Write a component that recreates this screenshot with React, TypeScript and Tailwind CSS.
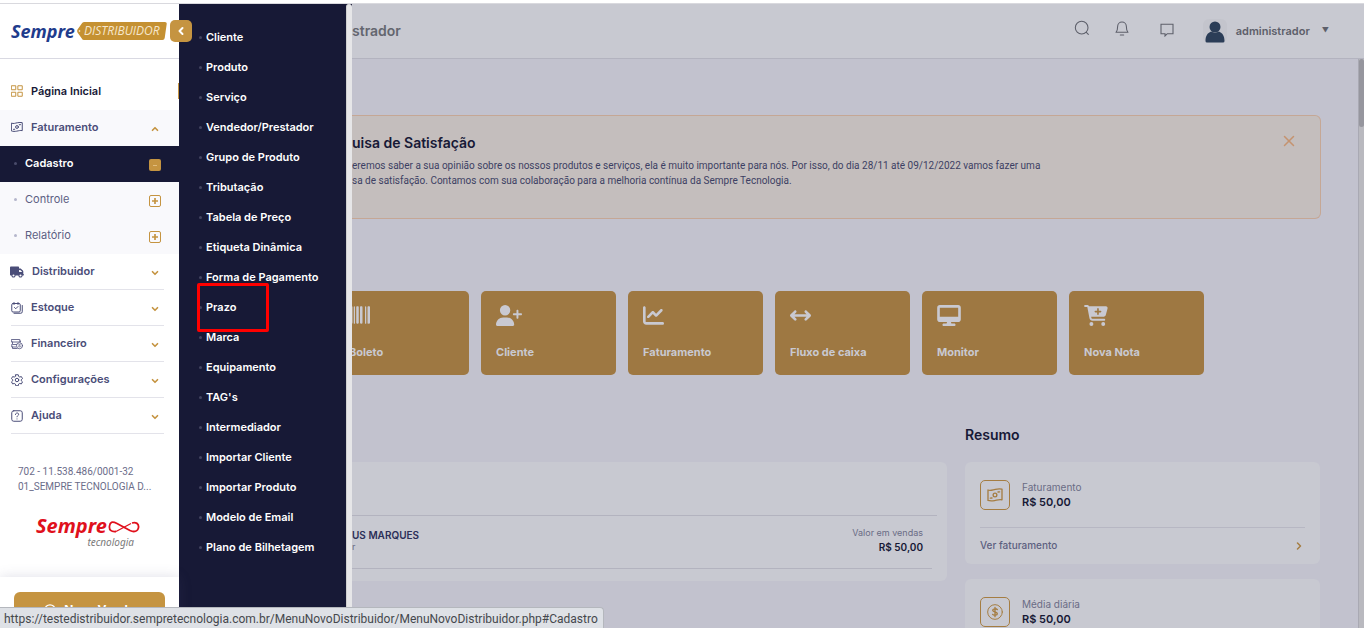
import type { ReactNode } from 'react';
import {
  FaArrowsLeftRight,
  FaBarcode,
  FaCartPlus,
  FaChartLine,
  FaDesktop,
  FaTruck,
  FaUserPlus,
} from 'react-icons/fa6';
import { ChevronDown, ChevronLeft, ChevronRight, ChevronUp, X } from 'lucide-react';

const cadastroLinks = [
  'Cliente',
  'Produto',
  'Serviço',
  'Vendedor/Prestador',
  'Grupo de Produto',
  'Tributação',
  'Tabela de Preço',
  'Etiqueta Dinâmica',
  'Forma de Pagamento',
  'Prazo',
  'Marca',
  'Equipamento',
  "TAG's",
  'Intermediador',
  'Importar Cliente',
  'Importar Produto',
  'Modelo de Email',
  'Plano de Bilhetagem',
];

const shortcuts = [
  { label: 'Boleto', icon: <FaBarcode className="h-5 w-[22px]" /> },
  { label: 'Cliente', icon: <FaUserPlus className="h-[21px] w-[26px]" /> },
  { label: 'Faturamento', icon: <FaChartLine className="h-[21px] w-[21px]" /> },
  { label: 'Fluxo de caixa', icon: <FaArrowsLeftRight className="h-[21px] w-[21px]" /> },
  { label: 'Monitor', icon: <FaDesktop className="h-[21px] w-6" /> },
  { label: 'Nova Nota', icon: <FaCartPlus className="h-[21px] w-6" /> },
];

function LineIcon({ children, className = 'h-3 w-3' }: { children: ReactNode; className?: string }) {
  return (
    <svg
      viewBox="0 0 24 24"
      fill="none"
      stroke="currentColor"
      strokeWidth="2"
      strokeLinecap="round"
      strokeLinejoin="round"
      className={className}
    >
      {children}
    </svg>
  );
}

function BanknoteIcon({ className }: { className?: string }) {
  return (
    <LineIcon className={className}>
      <path d="M1.500 4.500c4 1.500 7-.3 11-1s7-.8 10-.2v16c-4-1-7 .3-11 1s-7 .8-10-.2z" />
      <circle cx="12" cy="12" r="2.800" />
      <path d="M16.500 7.500l2.500-.2M5 16.700l2.500-.2" />
    </LineIcon>
  );
}

function GridIcon() {
  return (
    <LineIcon className="h-3 w-3 text-[#c59441]">
      <path d="M1.500 1.500h8v8h-8zM14.500 1.500h8v8h-8zM1.500 14.500h8v8h-8zM14.500 14.500h8v8h-8z" />
    </LineIcon>
  );
}

function StockIcon() {
  return (
    <LineIcon>
      <rect x="1.500" y="3" width="17" height="17" rx="2.500" />
      <path d="M6 1v4M14 1v4M7 11l2.500 2.500 4.500-4.500M22.500 7v12.500a3 3 0 0 1-3 3H6" />
    </LineIcon>
  );
}

function FinanceIcon() {
  return (
    <LineIcon>
      <path d="M1.500 3h16v5h-16zM3 8v5h8M1.500 13v5h8M3 18v3h9M19 8V6" strokeWidth="1.600" />
      <circle cx="17" cy="15.500" r="6" strokeWidth="1.600" />
      <path d="M19 13.500c-1-1-4-.8-4 .6s4 1.200 4 2.600-3 1.600-4 .6" strokeWidth="1.300" />
    </LineIcon>
  );
}

function GearIcon() {
  return (
    <LineIcon>
      <circle cx="12" cy="12" r="3.500" />
      <path d="M9.500 1.500h5l.7 3.300 2.300 1.300 3.200-1 2.300 4.200-2.500 2.200v2l2.500 2.200-2.300 4.200-3.200-1-2.300 1.300-.7 3.300h-5l-.7-3.300-2.300-1.300-3.200 1L1 15.700l2.500-2.200v-2L1 9.300l2.300-4.200 3.200 1 2.300-1.300z" />
    </LineIcon>
  );
}

function HelpIcon() {
  return (
    <LineIcon>
      <rect x="1.500" y="1.500" width="21" height="21" rx="4" />
      <path d="M8.800 9c0-4 6.500-4 6.500-.3 0 2.300-3.300 2.500-3.300 5M12 17.800v.2" />
    </LineIcon>
  );
}

function CoinIcon() {
  return (
    <LineIcon className="h-4 w-4">
      <circle cx="12" cy="12" r="11" strokeWidth="1.500" />
      <path d="M15.500 8.500c-1.500-2-7-1.800-7 1s7 2.200 7 5-5.500 3-7 1M12 5v14" />
    </LineIcon>
  );
}

function Brand() {
  return (
    <a href="#inicio" className="flex items-center gap-[2px]">
      <span className="text-[18px] leading-5 font-bold text-[#1f3c8c] italic [font-family:'Noto_Sans',sans-serif]">
        Sempre
      </span>
      <span className="relative flex h-[18px] w-[90px] items-center justify-center">
        <svg viewBox="0 0 90 18" className="absolute inset-0 h-full w-full">
          <path d="M7 0h81q2 0 1.700 2l-2 14q-.3 2-2.200 2H7q-1.500 0-2.200-1.500L.5 10.500q-.7-1.500 0-3L4.800 1.500Q5.500 0 7 0z" fill="#c59132" />
          <circle cx="2.500" cy="9" r=".8" fill="#fff" />
        </svg>
        <span className="relative text-[12px] leading-4 text-[#f6e7cc] italic [font-family:'Open_Sans',sans-serif]">
          DISTRIBUIDOR
        </span>
      </span>
    </a>
  );
}

function MenuItem({ icon, label }: { icon: ReactNode; label: string }) {
  return (
    <li className="pr-[15px] pl-[11px]">
      <a href="#menu" className="flex h-9 items-center gap-2 border-b border-[#e3e3ea] text-[11px] font-semibold text-[#4a4d78]">
        {icon}
        <span>{label}</span>
        <ChevronDown className="mt-0.5 mr-1 ml-auto h-[10px] w-[10px] text-[#c59441]" strokeWidth={4} />
      </a>
    </li>
  );
}

function SubItem({ label }: { label: string }) {
  return (
    <li>
      <a href="#submenu" className="flex h-9 items-center pr-[18px] pb-0.5 pl-[14px] text-[11px] text-[#5c5f83]">
        <span className="mr-2 h-[3px] w-[3px] rounded-full bg-[#b5b6cc]" />
        {label}
        <span className="mt-1 ml-auto flex h-3 w-3 items-center justify-center rounded-[2px] border border-[#c59441] text-[#c59441]">
          <LineIcon className="h-2 w-2">
            <path d="M12 3v18M3 12h18" strokeWidth="5" strokeLinecap="butt" />
          </LineIcon>
        </span>
      </a>
    </li>
  );
}

function Sidebar() {
  return (
    <aside className="relative z-20 flex w-[179px] shrink-0 flex-col bg-white">
      <div className="flex h-[55px] shrink-0 items-center border-b border-[#d9d9e2] pl-[11px]">
        <Brand />
      </div>
      <button
        type="button"
        aria-label="Recolher menu"
        className="absolute top-4 -right-[13px] flex h-[22px] w-[22px] items-center justify-center rounded-[5px] bg-[#c59441] text-white"
      >
        <ChevronLeft className="h-3 w-3" strokeWidth={4} />
      </button>

      <nav className="pt-[15px]">
        <ul>
          <li>
            <a href="#inicio" className="flex h-9 items-center gap-2 pb-0.5 pl-[11px] text-[11px] font-semibold text-[#171936]">
              <GridIcon />
              Página Inicial
              <span className="ml-auto h-4 w-px bg-[#c59441]" />
            </a>
          </li>
          <li className="bg-[#f9f9fc]">
            <a href="#faturamento" className="flex h-9 items-center gap-2 pr-[19px] pb-0.5 pl-[11px] text-[11px] font-semibold text-[#4a4d78]">
              <BanknoteIcon className="h-3 w-3" />
              Faturamento
              <ChevronUp className="mt-1 ml-auto h-[10px] w-[10px] text-[#c59441]" strokeWidth={4} />
            </a>
            <ul>
              <li>
                <a href="#Cadastro" className="flex h-9 items-center bg-[#171936] pr-[18px] pb-0.5 pl-[14px] text-[11px] font-semibold text-white">
                  <span className="mr-2 h-[3px] w-[3px] rounded-full bg-[#4a4c6b]" />
                  Cadastro
                  <span className="mt-1 ml-auto flex h-3 w-3 items-center justify-center rounded-[2px] bg-[#c59441]">
                    <span className="h-px w-1 bg-[#e0bb7c]" />
                  </span>
                </a>
              </li>
              <SubItem label="Controle" />
              <SubItem label="Relatório" />
            </ul>
          </li>
          <MenuItem icon={<FaTruck className="-ml-px h-3 w-[14px]" />} label="Distribuidor" />
          <MenuItem icon={<StockIcon />} label="Estoque" />
          <MenuItem icon={<FinanceIcon />} label="Financeiro" />
          <MenuItem icon={<GearIcon />} label="Configurações" />
          <MenuItem icon={<HelpIcon />} label="Ajuda" />
        </ul>
      </nav>

      <div className="px-[18px] pt-[30px] text-[10px] leading-[15px] text-[#6b6d8a] [font-family:Roboto,sans-serif]">
        <p>702 - 11.538.486/0001-32</p>
        <p>01_SEMPRE TECNOLOGIA D...</p>
      </div>

      <div className="mt-[22px] ml-9 w-[106px] italic [font-family:'Noto_Sans',sans-serif]">
        <div className="flex items-center gap-px">
          <span className="text-[20px] leading-5 font-bold text-[#e0101c]">Sempre</span>
          <svg viewBox="0 0 32 13" className="h-[13px] w-8 shrink-0" fill="none" stroke="#e0101c">
            <path d="M8 11.500C3 12 1 10 1.500 6S4 1 9 3.500l13 7c4 2 8 1 8.500-3S28 2 24 3" strokeWidth="1.800" />
            <path d="M8 11.500l15-8" strokeWidth="1.300" />
          </svg>
        </div>
        <p className="pr-2 text-right text-[10px] leading-3 text-[#7b7b7b]">tecnologia</p>
      </div>

      <div className="mt-auto bg-white px-[14px] pt-[15px] shadow-[0_0_12px_rgba(80,80,120,0.18)]">
        <button
          type="button"
          className="flex h-9 w-full items-center justify-center gap-2 rounded-t-md bg-[#c59441] text-[12px] font-bold text-white"
        >
          <LineIcon className="h-3 w-3">
            <circle cx="12" cy="12" r="10.500" strokeWidth="2.500" />
            <path d="M12 7v10M7 12h10" strokeWidth="2.500" />
          </LineIcon>
          Nova Venda
        </button>
      </div>
    </aside>
  );
}

function CadastroPanel() {
  return (
    <div className="z-10 flex w-[173px] shrink-0 bg-[#171936]">
      <ul className="flex-1 pt-[18px] pl-5">
        {cadastroLinks.map((label) => (
          <li key={label} className="relative">
            <a href="#Cadastro" className="flex h-[30px] items-center text-[11px] font-semibold whitespace-nowrap text-white">
              <span className="mr-1 h-[3px] w-[3px] rounded-full bg-[#42445f]" />
              {label}
            </a>
            {label === 'Prazo' && (
              <span className="pointer-events-none absolute -top-[9px] -left-[2px] z-10 h-[49px] w-[72px] rounded-[2px] border-[3px] border-[#ff0000]" />
            )}
          </li>
        ))}
      </ul>
      <div className="w-[6px] rounded-t-[3px] border-l border-[#cfcfcf] bg-[#e6e6e8]" />
    </div>
  );
}

function TopBar() {
  return (
    <header className="flex h-[55px] shrink-0 items-center justify-between border-b border-[#b3b3bf] bg-[#c8c9d1] pr-[35px]">
      <h1 className="pb-0.5 text-[14px] font-semibold text-[#64666f]">strador</h1>
      <div className="flex items-center text-[#5d5f6a]">
        <div className="flex items-center gap-6 pb-[6px]">
          <button type="button" aria-label="Buscar">
            <LineIcon className="h-4 w-4">
              <circle cx="11.500" cy="11.500" r="9.500" strokeWidth="1.600" />
              <path d="M18.500 18.500l3 3" strokeWidth="1.600" />
            </LineIcon>
          </button>
          <button type="button" aria-label="Notificações">
            <LineIcon className="h-4 w-4">
              <path d="M3 18.500h18c-2-2-2.500-4-2.500-9a6.500 6.500 0 0 0-13 0c0 5-.5 7-2.500 9zM9.500 22.500h5" strokeWidth="1.600" />
            </LineIcon>
          </button>
          <button type="button" aria-label="Mensagens" className="mt-0.5 ml-[5px]">
            <LineIcon className="h-4 w-4">
              <path d="M3 5h18v14h-8.500L9 22.500V19H3z" strokeWidth="1.600" strokeLinejoin="miter" />
            </LineIcon>
          </button>
        </div>
        <button type="button" className="ml-7 flex items-center text-[11px] font-semibold">
          <span className="flex h-6 w-6 items-end justify-center rounded-md bg-[#c3c4cc]">
            <svg viewBox="0 0 20 22" className="h-[22px] w-5" fill="#2b3d57">
              <circle cx="10" cy="6" r="5.500" />
              <path d="M.5 20c0-5 2-8 5.500-9.500 2.500 1.500 5.500 1.500 8 0 3.500 1.500 5.500 4.500 5.500 9.500q0 1.500-1.500 1.500H2Q.5 21.500.5 20z" />
            </svg>
          </span>
          <span className="ml-[9px]">administrador</span>
          <span className="ml-3 text-[7px]">▼</span>
        </button>
      </div>
    </header>
  );
}

function SurveyBanner() {
  return (
    <section className="flex h-[104px] justify-between rounded-r-md border border-l-0 border-[#c5a795] bg-[#c4bebd] pt-[19px] pr-[22px]">
      <div>
        <h2 className="text-[14px] leading-4 font-semibold text-[#171936]">uisa de Satisfação</h2>
        <p className="mt-[7px] text-[10px] leading-[15px] text-[#3c3f63] [font-family:Roboto,sans-serif]">
          eremos saber a sua opinião sobre os nossos produtos e serviços, ela é muito importante para nós. Por
          isso, do dia 28/11 até 09/12/2022 vamos fazer uma
          <br />
          sa de satisfação. Contamos com sua colaboração para a melhoria contínua da Sempre Tecnologia.
        </p>
      </div>
      <button type="button" aria-label="Fechar" className="-mt-[3px] h-[18px] text-[#c5936f]">
        <X className="h-[18px] w-[18px]" strokeWidth={2} />
      </button>
    </section>
  );
}

function SummaryInfo({ icon, label }: { icon: ReactNode; label: string }) {
  return (
    <div className="flex gap-3 pb-[17px]">
      <span className="flex h-[30px] w-[30px] items-center justify-center rounded-[5px] border border-[#a57d42] text-[#a57d42]">
        {icon}
      </span>
      <div className="text-[10px] leading-[15px] text-[#6a6c85]">
        <p>{label}</p>
        <p className="text-[11px] font-semibold text-[#171936]">R$ 50,00</p>
      </div>
    </div>
  );
}

function Dashboard() {
  return (
    <main className="flex min-h-0 flex-1">
      <div className="min-w-0 flex-1 overflow-hidden pt-14 pr-[37px]">
        <SurveyBanner />

        <div className="mt-[72px] -ml-[18px] flex gap-3">
          {shortcuts.map(({ label, icon }) => (
            <a
              key={label}
              href="#atalho"
              className="flex h-[84px] w-[135px] flex-col justify-between rounded-[5px] bg-[#9e7842] px-[15px] pt-[14px] pb-[15px] text-[11px] leading-4 font-bold text-[#c9c9d1]"
            >
              {icon}
              {label}
            </a>
          ))}
        </div>

        <div className="mt-[51px] flex items-start gap-[18px] pr-px">
          <section className="mt-9 h-[119px] min-w-0 flex-1 rounded-r-md bg-[#c8c9d1] pt-[53px]">
            <div className="mr-[10px] border-t border-[#b3b3bf]" />
            <div className="mr-[15px] flex h-[53px] items-start justify-between border-b border-[#b3b3bf] pt-[10px] pr-[9px] text-[9px] leading-[14px] text-[#6a6c85]">
              <div className="pt-[2px]">
                <p className="text-[10px] font-semibold text-[#2c2f58]">US MARQUES</p>
                <p className="leading-[10px]">r</p>
              </div>
              <div className="text-right">
                <p>Valor em vendas</p>
                <p className="text-[10px] font-semibold text-[#171936]">R$ 50,00</p>
              </div>
            </div>
          </section>

          <aside className="w-[355px] shrink-0">
            <h2 className="text-[14px] leading-[18px] font-semibold text-[#171936]">Resumo</h2>
            <div className="mt-[18px] flex flex-col gap-[15px]">
              <article className="rounded-md bg-[#c8c9d1] px-[15px] pt-[18px]">
                <SummaryInfo icon={<BanknoteIcon className="h-4 w-4" />} label="Faturamento" />
                <a
                  href="#resumo"
                  className="flex h-[37px] items-center justify-between border-t border-[#b7b7c3] pb-px text-[10px] font-medium text-[#5d6080]"
                >
                  Ver faturamento
                  <ChevronRight className="h-3 w-3 text-[#a57d42]" strokeWidth={3} />
                </a>
              </article>
              <article className="h-[102px] rounded-md bg-[#c8c9d1] px-[15px] pt-[18px]">
                <SummaryInfo icon={<CoinIcon />} label="Média diária" />
              </article>
            </div>
          </aside>
        </div>
      </div>
      <div className="w-[6px] shrink-0 border-l border-[#a9a9b3] bg-[#b9b9bf]">
        <div className="h-[68px] rounded-[3px] bg-[#96969e]" />
      </div>
    </main>
  );
}

export default function App() {
  return (
    <div className="flex h-screen flex-col overflow-hidden bg-[#c2c2ce] [font-family:Inter,sans-serif]">
      <div className="h-1 shrink-0 border-b border-[#d9d9de] bg-white" />
      <div className="flex min-h-0 flex-1">
        <Sidebar />
        <CadastroPanel />
        <div className="flex min-w-0 flex-1 flex-col overflow-hidden">
          <TopBar />
          <Dashboard />
        </div>
      </div>

      {/* browser link preview */}
      <div className="absolute bottom-0 left-0 z-30 flex h-[21px] items-center rounded-tr-[4px] border-t border-r border-[#b4b7bd] bg-[#dee1e6] pt-0.5 pr-[5px] pl-1 text-[12px] whitespace-nowrap text-[#45484d] [font-family:Roboto,sans-serif]">
        https://testedistribuidor.sempretecnologia.com.br/MenuNovoDistribuidor/MenuNovoDistribuidor.php#Cadastro
      </div>
    </div>
  );
}
